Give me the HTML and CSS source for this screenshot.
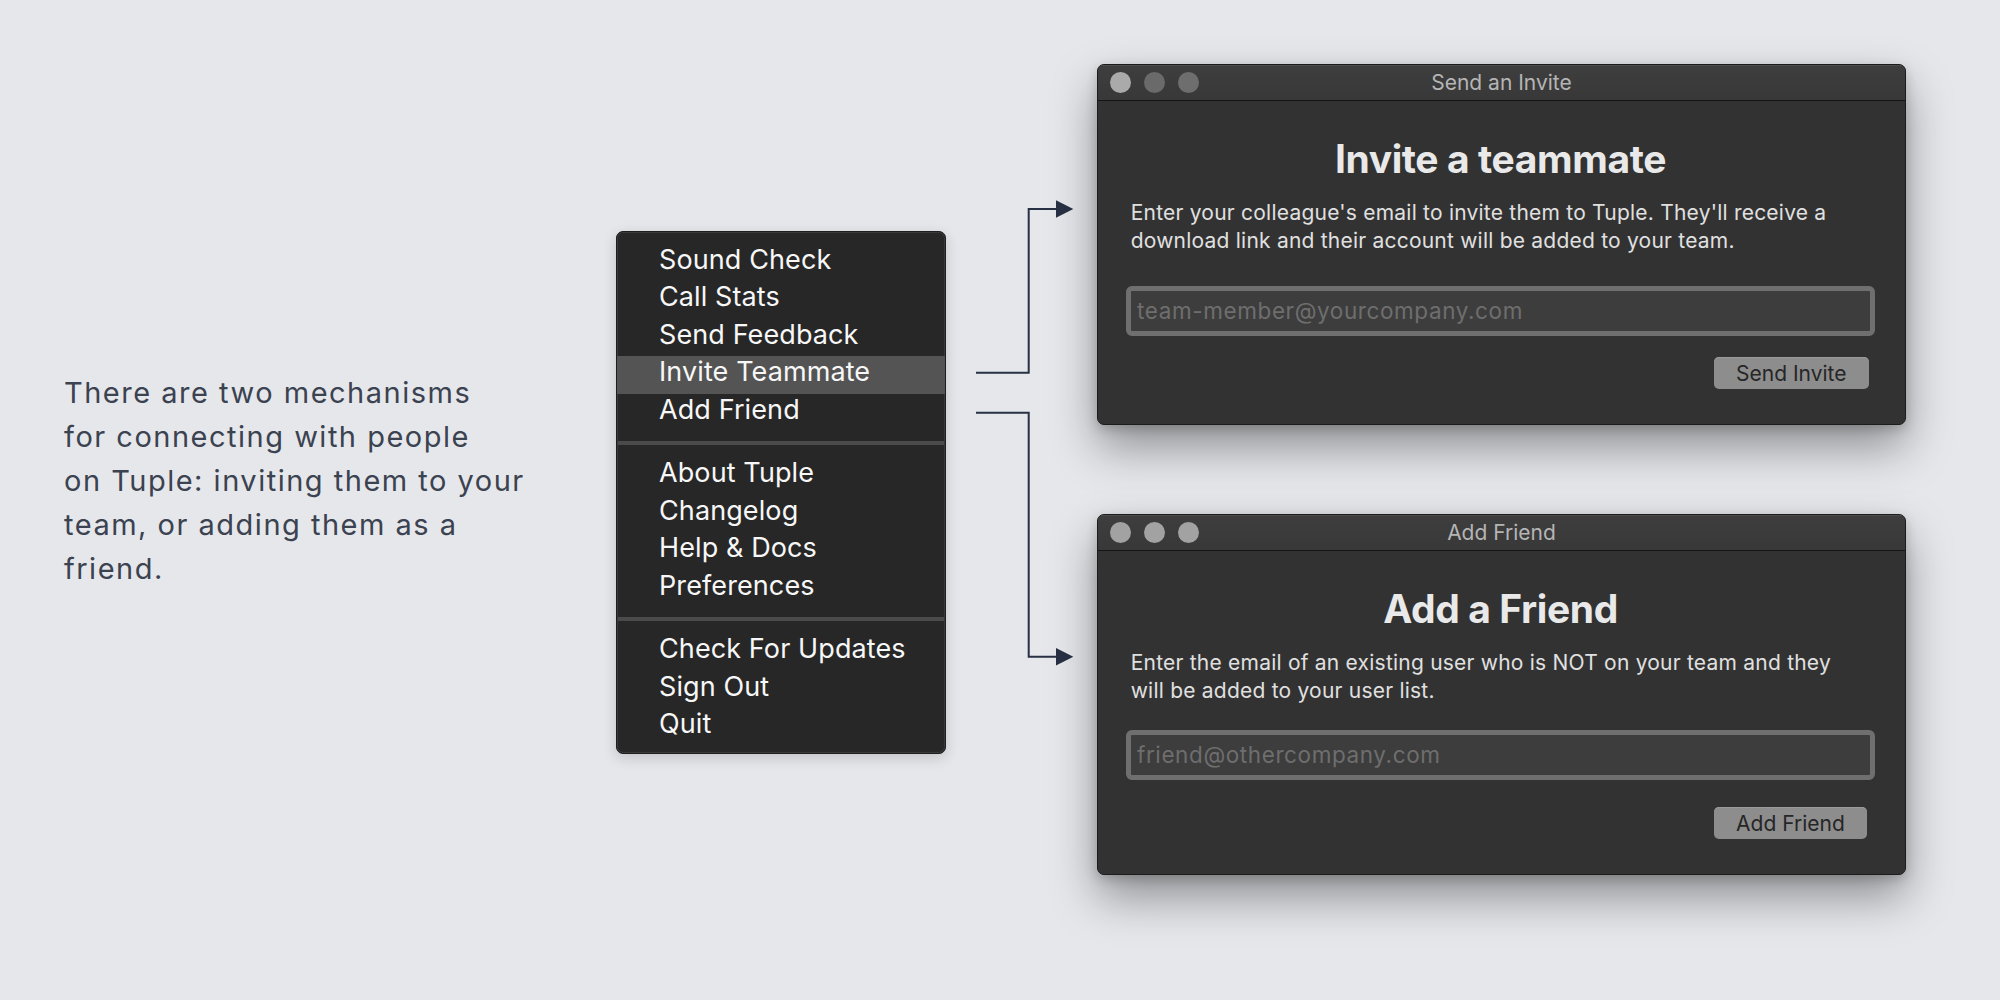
FILE: index.html
```html
<!DOCTYPE html>
<html lang="en">
<head>
<meta charset="utf-8">
<title>Connecting with people on Tuple</title>
<link rel="stylesheet" href="styles.css">
</head>
<body>
<main class="stage">
  <p class="intro">
    <span class="intro-line">There are two mechanisms</span>
    <span class="intro-line">for connecting with people</span>
    <span class="intro-line">on Tuple: inviting them to your</span>
    <span class="intro-line">team, or adding them as a</span>
    <span class="intro-line">friend.</span>
  </p>

  <nav class="menu">
    <ul class="menu-group">
      <li class="menu-item">Sound Check</li>
      <li class="menu-item">Call Stats</li>
      <li class="menu-item">Send Feedback</li>
      <li class="menu-item is-active">Invite Teammate</li>
      <li class="menu-item">Add Friend</li>
    </ul>
    <div class="menu-sep"></div>
    <ul class="menu-group">
      <li class="menu-item">About Tuple</li>
      <li class="menu-item">Changelog</li>
      <li class="menu-item">Help &amp; Docs</li>
      <li class="menu-item">Preferences</li>
    </ul>
    <div class="menu-sep"></div>
    <ul class="menu-group">
      <li class="menu-item">Check For Updates</li>
      <li class="menu-item">Sign Out</li>
      <li class="menu-item">Quit</li>
    </ul>
  </nav>

  <svg class="connectors" width="151" height="700" viewBox="0 0 151 700" aria-hidden="true">
    <path d="M30 372.7 H82.7 V209 H112" fill="none" stroke="#283044" stroke-width="2"/>
    <polygon points="110,200.3 127.3,209 110,217.7" fill="#283044"/>
    <path d="M30 412.7 H82.7 V656.7 H112" fill="none" stroke="#283044" stroke-width="2"/>
    <polygon points="110,648 127.3,656.7 110,665.4" fill="#283044"/>
  </svg>

  <section class="windows">
    <div class="win win-invite">
      <div class="titlebar">
        <div class="lights">
          <span class="light light-a"></span>
          <span class="light light-b"></span>
          <span class="light light-c"></span>
        </div>
        <div class="win-title">Send an Invite</div>
        <div></div>
      </div>
      <div class="win-body">
        <h2 class="win-heading">Invite a teammate</h2>
        <p class="win-text"><span class="nw">Enter your colleague's email to invite them to Tuple. They'll receive a</span><br><span class="nw">download link and their account will be added to your team.</span></p>
        <div class="field"><span class="placeholder">team-member@yourcompany.com</span></div>
        <div class="actions"><span class="btn btn-invite">Send Invite</span></div>
      </div>
    </div>

    <div class="win win-friend">
      <div class="titlebar">
        <div class="lights">
          <span class="light"></span>
          <span class="light"></span>
          <span class="light"></span>
        </div>
        <div class="win-title">Add Friend</div>
        <div></div>
      </div>
      <div class="win-body">
        <h2 class="win-heading">Add a Friend</h2>
        <p class="win-text"><span class="nw">Enter the email of an existing user who is NOT on your team and they</span><br><span class="nw">will be added to your user list.</span></p>
        <div class="field"><span class="placeholder">friend@othercompany.com</span></div>
        <div class="actions"><span class="btn btn-friend">Add Friend</span></div>
      </div>
    </div>
  </section>
</main>
</body>
</html>
```

FILE: styles.css
```css
html, body {
  margin: 0;
  padding: 0;
  background: #e5e7eb;
}

body {
  font-family: Inter, "Noto Sans", sans-serif;
}

.stage {
  display: flex;
  align-items: flex-start;
  width: 2000px;
  height: 1000px;
  padding-left: 64px;
  box-sizing: border-box;
  overflow: hidden;
}

/* Intro copy */
.intro {
  flex: none;
  width: 552px;
  margin: 371px 0 0 0;
  font-size: 29px;
  line-height: 44px;
  letter-spacing: 1.5px;
  color: #3b4250;
}

.intro-line {
  display: block;
  white-space: nowrap;
}

/* Menu */
.menu {
  flex: none;
  width: 330px;
  margin-top: 231px;
  box-sizing: border-box;
  padding: 11.5px 0 7px;
  background: #272727;
  border: 1px solid #1d1d1d;
  border-radius: 7px;
  box-shadow: 0 4px 14px rgba(0, 0, 0, 0.16), inset 0 0 0 1px #3a3a3a;
}

.menu-group {
  list-style: none;
  margin: 0;
  padding: 0;
}

.menu-item {
  padding: 0 0 5.5px 42px;
  font-size: 27px;
  line-height: 32px;
  letter-spacing: 0.1px;
  color: #f7f7f7;
  white-space: nowrap;
}

.menu-item.is-active {
  background: #545454;
}

.menu-sep {
  height: 3.5px;
  margin: 10px 1px 12.5px;
  background: #4a4a4a;
}

/* Connectors */
.connectors {
  flex: none;
  display: block;
}

/* Windows */
.windows {
  flex: none;
  width: 809px;
  margin-top: 64px;
  display: flex;
  flex-direction: column;
  gap: 89px;
}

.win {
  height: 361px;
  box-sizing: border-box;
  display: flex;
  flex-direction: column;
  background: #323232;
  border: 1px solid #1c1c1c;
  border-radius: 7px;
  overflow: hidden;
  box-shadow: 0 22px 46px rgba(0, 0, 0, 0.38), 0 4px 12px rgba(0, 0, 0, 0.18);
}

.titlebar {
  flex: none;
  height: 35px;
  display: grid;
  grid-template-columns: 1fr auto 1fr;
  align-items: center;
  background: linear-gradient(#3e3e3e, #383838);
  border-bottom: 1px solid #151515;
  box-shadow: inset 0 1px 0 #4d4d4d;
}

.lights {
  display: flex;
  gap: 13px;
  padding-left: 12px;
}

.light {
  width: 21px;
  height: 21px;
  border-radius: 50%;
  background: #a2a2a2;
}

.light-a { background: #aaaaaa; }
.light-b { background: #6a6a6a; }
.light-c { background: #6e6e6e; }

.win-title {
  font-size: 21px;
  color: #b5b5b5;
  white-space: nowrap;
}

.win-body {
  flex: 1;
  display: flex;
  flex-direction: column;
  padding: 0 30px 35px 28px;
}

.win-heading {
  margin: 33.5px 0 0;
  text-align: center;
  font-size: 39px;
  line-height: 48px;
  font-weight: 700;
  letter-spacing: -0.4px;
  color: #e9e9e9;
}

.win-text {
  margin: 16px 0 0;
  padding-left: 4.7px;
  font-size: 21px;
  line-height: 28.5px;
  letter-spacing: 0.22px;
  color: #e0e0e0;
}

.nw {
  white-space: nowrap;
}

.field {
  height: 50px;
  box-sizing: border-box;
  margin-top: 30px;
  display: flex;
  align-items: center;
  padding-left: 6px;
  background: #3d3d3d;
  border: 5px solid #6f6f6f;
  border-radius: 6px;
}

.win-friend .field {
  margin-top: 24px;
}

.placeholder {
  font-size: 22.5px;
  letter-spacing: 0.6px;
  color: #6e6e6e;
  white-space: nowrap;
}

.actions {
  margin-top: auto;
  display: flex;
  justify-content: flex-end;
  padding-right: 6px;
}

.btn {
  height: 31.6px;
  box-sizing: border-box;
  display: flex;
  align-items: center;
  padding: 0 22.5px;
  font-size: 21px;
  color: #262626;
  background: #8d8d8d;
  border-radius: 5px;
  box-shadow: inset 0 1px 0 #9a9a9a;
  white-space: nowrap;
}

.btn-friend {
  margin-right: 1.7px;
}
```
